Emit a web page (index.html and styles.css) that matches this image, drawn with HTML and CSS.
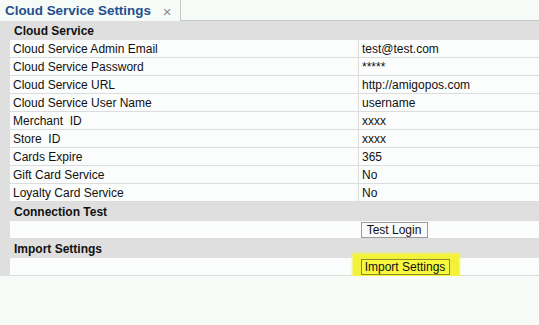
FILE: index.html
```html
<!DOCTYPE html>
<html lang="en">
<head>
    <meta charset="UTF-8">
    <title>Cloud Service Settings</title>
    <link rel="stylesheet" href="styles.css">
</head>
<body>
<div class="tabbar">
    <div class="tab">
        <span class="tab-title">Cloud Service Settings</span>
        <span class="tab-close">&times;</span>
    </div>
    <div class="tab-rest"></div>
</div>

<div class="panel">
    <table class="grid">
        <tr class="section"><td colspan="2">Cloud Service</td></tr>
        <tr><td class="label">Cloud Service Admin Email</td><td class="value">test@test.com</td></tr>
        <tr><td class="label">Cloud Service Password</td><td class="value">*****</td></tr>
        <tr><td class="label">Cloud Service URL</td><td class="value">http://amigopos.com</td></tr>
        <tr><td class="label">Cloud Service User Name</td><td class="value">username</td></tr>
        <tr><td class="label">Merchant&nbsp; ID</td><td class="value">xxxx</td></tr>
        <tr><td class="label">Store&nbsp; ID</td><td class="value">xxxx</td></tr>
        <tr><td class="label">Cards Expire</td><td class="value">365</td></tr>
        <tr><td class="label">Gift Card Service</td><td class="value">No</td></tr>
        <tr><td class="label">Loyalty Card Service</td><td class="value">No</td></tr>

        <tr class="section"><td colspan="2">Connection Test</td></tr>
        <tr class="action">
            <td class="label"></td>
            <td class="value"><button type="button" class="btn">Test Login</button></td>
        </tr>

        <tr class="section"><td colspan="2">Import Settings</td></tr>
        <tr class="action">
            <td class="label"></td>
            <td class="value">
                <span class="highlight"></span>
                <button type="button" class="btn btn-import">Import Settings</button>
            </td>
        </tr>
    </table>
</div>
</body>
</html>
```

FILE: styles.css
```css
body {
    margin: 0;
    background-color: #f6fbf8;
    font-family: "Liberation Sans", Arial, sans-serif;
    font-size: 12px;
    color: #111;
}

div.tabbar {
    display: flex;
    height: 21px;
}

div.tabbar div.tab {
    width: 181px;
    border-right: 1px solid #c8c8c8;
    display: flex;
    align-items: center;
    padding-left: 5px;
    box-sizing: border-box;
}

div.tabbar span.tab-title {
    color: #1f4f8e;
    font-weight: bold;
    font-size: 13.4px;
}

div.tabbar span.tab-close {
    color: #8a8a8a;
    font-size: 15px;
    margin-left: 12px;
    margin-top: 1px;
}

div.tabbar div.tab-rest {
    flex: 1;
    border-bottom: 1px solid #c8c8c8;
}

div.panel {
    background-color: #dfdfdf;
    padding-left: 10px;
}

table.grid {
    width: 100%;
    border-collapse: collapse;
}

table.grid td {
    height: 17px;
    padding: 0 0 0 3px;
    border-bottom: 1px solid #dcdcdc;
    white-space: nowrap;
}

table.grid tr.section td {
    background-color: #dfdfdf;
    font-weight: bold;
    padding-left: 4px;
    border-bottom: none;
    height: 19px;
}

table.grid td.label {
    width: 345px;
    background-color: #fbfdfc;
}

table.grid td.value {
    background-color: #fbfdfc;
    border-left: 1px solid #dcdcdc;
}

table.grid tr.action td {
    height: 17px;
}

table.grid tr.action td.value {
    border-left: none;
    position: relative;
    padding-left: 2px;
}

button.btn {
    display: block;
    font-family: "Liberation Sans", Arial, sans-serif;
    font-size: 12px;
    width: 67px;
    height: 16px;
    padding: 0;
    background-color: #fbfbfb;
    border: 1px solid #9c9c9c;
    color: #111;
    line-height: 14px;
}

button.btn-import {
    position: relative;
    width: 89px;
    background-color: #f8f83e;
    border-color: #8e8c20;
}

span.highlight {
    position: absolute;
    left: -6px;
    top: -4px;
    width: 106px;
    height: 29px;
    background-color: #f2f23a;
    box-shadow: 0 0 2px 1px #f2f25a;
}
```
